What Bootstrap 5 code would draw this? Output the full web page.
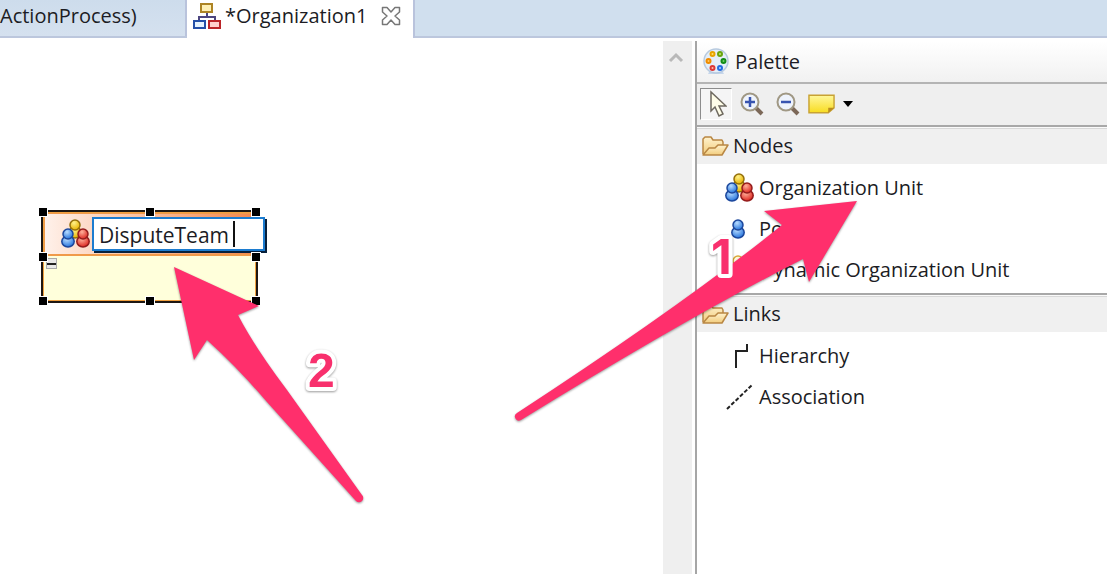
<!DOCTYPE html>
<html lang="en">
<head>
<meta charset="utf-8">
<meta name="viewport" content="width=device-width, initial-scale=1">
<title>Organization1</title>
<link href="https://cdn.jsdelivr.net/npm/bootstrap@5.3.0/dist/css/bootstrap.min.css" rel="stylesheet">
<style>
  body { font-family: "Open Sans", "Noto Sans", sans-serif; font-size: 20px; line-height: 24px; color: #1c1c24; background: #fff; padding: 0 1px 4px 0; }
  button { color: inherit; border: 0; background: none; padding: 0; text-align: left; white-space: nowrap; }
  svg { flex: none; display: block; }

  .editor-tabs { height: 38px; background: #d0dfee; border-bottom: 2px solid #bcc7dd; }
  .editor-tab { height: 38px; padding-bottom: 6px; border-right: 2px solid #b9c3dc; }
  .tab-back { width: 187px; height: 36px; padding-bottom: 4px; background: linear-gradient(#cddcec, #d5e1ef); }
  .tab-front { width: 228px; padding-left: 6px; background: #fff; }

  .workarea { padding-top: 3px; }
  .scroll-track { width: 29px; padding-right: 3px; background: #efefef; }
  .palette { width: 412px; margin-left: 3px; border-left: 2px solid #a6a6a6; }
  .palette-title { height: 43px; padding-left: 6px; gap: 6px; background: linear-gradient(#fff, #f1f1f1); border-bottom: 2px solid #b4b4b4; }
  .palette-tools { height: 41px; padding: 0 0 2px 3px; gap: 8px; background: #efefef; }
  .tool-active { width: 32px; height: 32px; border: 1px solid #fff; border-top-color: #8c8c8c; border-left-color: #8c8c8c; background: #f5f5f5; }
  .drawer-head { height: 39px; padding-left: 4px; background: #f0f0f0; border-top: 2px solid #a8a8a8; box-shadow: inset 0 1px #fafafa, inset 0 2px #d8d8d8; }
  .drawer-list { padding: 3px 0 3px 26px; }
  .drawer-list button { height: 41px; }

  .org-node { left: 41px; top: 169px; width: 217px; height: 93px; border: 2px solid #1d1713; background: #ffffdb; }
  .org-head { height: 44px; padding-left: 15px; background: linear-gradient(90deg, #fff1ea, #f4874c); border: 2px solid #f09a4a; }
  .org-frame { inset: 0; border: 1px solid #f0a040; }
  .name-box { left: 49px; top: 5px; width: 173px; height: 34px; border: 2px solid #1c7cd0; box-shadow: 2px 2px #07203c; background: #fff; }
  .name-box input { border: 0; outline: 0; width: 100%; padding: 1px 0 0 5px; background: none; color: inherit; font-size: 21px; }
  .text-caret { left: 139px; top: 2px; width: 2px; height: 26px; background: #111; }
  .grip { width: 10px; height: 10px; background: #000; border: 1px solid #fff; transform: translate(-50%, -50%); }
  .fold { left: 3px; top: 46px; width: 11px; height: 11px; background: #e8e8e8; border: 1px solid #aaa; }
  .fold::after { content: ""; display: block; height: 2px; background: #222; }

  .callout { pointer-events: none; overflow: visible; filter: drop-shadow(0 1px 1px #0006); }
  .callout path { fill: #ff2f6c; }
  .callout text { font: bold 48px "Liberation Sans", sans-serif; fill: #f8306d; stroke: #fff; stroke-width: 8px; stroke-linejoin: round; paint-order: stroke; }
  .callout-1 text { font-family: Inter, sans-serif; }
  .callout-2 { left: 170px; top: 222px; }
  .callout-1 { right: 230px; top: 156px; }
</style>
</head>
<body class="d-flex flex-column vh-100 overflow-hidden">

<svg width="0" height="0" class="position-absolute" aria-hidden="true">
  <defs>
    <radialGradient id="gBlue" cx=".4" cy=".3" r=".7"><stop stop-color="#b8dcff"/><stop offset="1" stop-color="#2674dc"/></radialGradient>
    <radialGradient id="gRed" cx=".4" cy=".3" r=".7"><stop stop-color="#ffb09a"/><stop offset="1" stop-color="#dc2720"/></radialGradient>
    <radialGradient id="gGold" cx=".4" cy=".3" r=".7"><stop stop-color="#fff18a"/><stop offset="1" stop-color="#e8b400"/></radialGradient>
    <linearGradient id="gNote" x2="0" y2="1"><stop stop-color="#fff79a"/><stop offset="1" stop-color="#f8dc20"/></linearGradient>
    <linearGradient id="gFolder" x2="0" y2="1"><stop stop-color="#fff3cf"/><stop offset="1" stop-color="#f2cc7c"/></linearGradient>
  </defs>
  <symbol id="person" viewBox="0 0 14 20">
    <ellipse cx="7" cy="13.500" rx="6.200" ry="5.500" stroke-width="1.500"/>
    <circle cx="7" cy="6" r="5" stroke-width="1.500"/>
  </symbol>
  <symbol id="team" viewBox="0 0 30 30">
    <use href="#person" x="8" y="0" width="14" height="20" fill="url(#gGold)" stroke="#94700c"/>
    <use href="#person" x="1" y="9" width="14" height="20" fill="url(#gBlue)" stroke="#1c479c"/>
    <use href="#person" x="16" y="9" width="14" height="20" fill="url(#gRed)" stroke="#941c1c"/>
  </symbol>
  <symbol id="folder" viewBox="0 0 28 22">
    <path d="M2 19V4l2-2h6l2 3h9l1 2v3" fill="url(#gFolder)" stroke="#b98743" stroke-width="1.500" stroke-linejoin="round"/>
    <path d="M2 20 8 13h6l3-3h10l-6 10Z" fill="url(#gFolder)" stroke="#b98743" stroke-width="1.500" stroke-linejoin="round"/>
  </symbol>
  <symbol id="lens" viewBox="0 0 24 24">
    <path d="m16 16 6 6" stroke="#7c6858" stroke-width="4"/>
    <circle cx="10" cy="10" r="8.500" fill="#eef3fc" stroke="#a09884" stroke-width="2"/>
  </symbol>
</svg>

<nav class="editor-tabs d-flex flex-shrink-0" aria-label="Editors">
  <button class="editor-tab tab-back d-flex align-items-center">ActionProcess)</button>
  <div class="editor-tab tab-front d-flex align-items-center">
    <svg width="28" height="28" viewBox="0 0 28 28" aria-hidden="true">
      <path d="M14 10v5M6 19v-4h16v4" fill="none" stroke="#4c4680" stroke-width="2"/>
      <rect x="8" y="2" width="11" height="8" fill="#fff0b4" stroke="#ad8424" stroke-width="2"/>
      <rect x="1" y="19" width="11" height="7" fill="#e5f3ff" stroke="#2450a8" stroke-width="2"/>
      <rect x="16" y="19" width="11" height="7" fill="#ffd0cc" stroke="#bb2428" stroke-width="2"/>
    </svg>
    <button class="ms-1 me-auto">*Organization1</button>
    <button class="me-2 pe-1" aria-label="Close tab">
      <svg width="20" height="20" viewBox="0 0 20 20"><path d="M1.500 1.500h4.500L10 6l4-4.500h4.500V6L14 10l4.500 4v4.500H14L10 14l-4 4.500H1.500V14L6 10 1.500 6Z" fill="#fff" stroke="#777" stroke-width="1.500" stroke-linejoin="round"/></svg>
    </button>
  </div>
</nav>

<main class="workarea d-flex flex-grow-1">
  <section class="flex-grow-1 position-relative" aria-label="Diagram">
    <div class="org-node position-absolute">
      <div class="org-frame position-absolute"></div>
      <div class="org-head d-flex align-items-center"><svg width="30" height="30"><use href="#team"/></svg></div>
      <button class="fold position-absolute" aria-label="Collapse"></button>
      <div class="name-box position-absolute d-flex align-items-center">
        <input type="text" value="DisputeTeam" aria-label="Unit name">
        <span class="text-caret position-absolute"></span>
      </div>
      <i class="grip position-absolute top-0 start-0"></i>
      <i class="grip position-absolute top-0 start-50"></i>
      <i class="grip position-absolute top-0 start-100"></i>
      <i class="grip position-absolute top-50 start-0"></i>
      <i class="grip position-absolute top-50 start-100"></i>
      <i class="grip position-absolute top-100 start-0"></i>
      <i class="grip position-absolute top-100 start-50"></i>
      <i class="grip position-absolute top-100 start-100"></i>
    </div>
    <svg class="callout callout-2 position-absolute" width="200" height="245" viewBox="170 263 200 245">
      <path d="M174 267 259 306 238 315Q254 346 287 390L362 495A4 4 0 0 1 356 501L267 402Q238 368 207 340L194 360Z"/>
      <text x="308" y="387">2</text>
    </svg>
  </section>

  <div class="scroll-track d-flex justify-content-center">
    <svg class="mt-2" width="16" height="16" viewBox="0 0 16 16"><path d="m2 12 6-6 6 6" fill="none" stroke="#b8b8b8" stroke-width="3"/></svg>
  </div>

  <aside class="palette position-relative flex-shrink-0">
    <header class="palette-title d-flex align-items-center">
      <svg width="26" height="28" viewBox="0 0 26 28">
        <path d="M7 22h12l2 4H5Z" fill="#c6d6ea"/><circle cx="13" cy="13" r="12" fill="#e4eef9" stroke="#b7cadf" stroke-width="1.500"/>
        <g stroke-width="2"><circle cx="9.500" cy="6" r="2" fill="#ffe070" stroke="#e8a400"/><circle cx="17" cy="6" r="2" fill="#c8e870" stroke="#68a410"/><circle cx="5.500" cy="13" r="2" fill="#ffc860" stroke="#f08c00"/><circle cx="20.500" cy="13" r="2" fill="#70d068" stroke="#148c18"/><circle cx="9.500" cy="20" r="2" fill="#ffc0b0" stroke="#dc3838"/><circle cx="17" cy="20" r="2" fill="#b0dcff" stroke="#246ce0"/></g>
      </svg>
      <span>Palette</span>
    </header>
    <div class="palette-tools d-flex align-items-center">
      <button class="tool-active d-flex align-items-center justify-content-center" aria-label="Select">
        <svg width="22" height="28" viewBox="0 0 22 28"><path d="M6 2v19l4-4 4 9 4-2-4-8h7Z" fill="#fffde8" stroke="#6f6a60" stroke-width="1.500"/></svg>
      </button>
      <button aria-label="Zoom in"><svg width="24" height="24" viewBox="0 0 24 24"><use href="#lens"/><path d="M5 10h10M10 5v10" stroke="#3854b0" stroke-width="2.500"/></svg></button>
      <button class="ms-1 me-n1" aria-label="Zoom out"><svg width="24" height="24" viewBox="0 0 24 24"><use href="#lens"/><path d="M5 10h10" stroke="#3854b0" stroke-width="2.500"/></svg></button>
      <button class="d-flex align-items-center gap-2" aria-label="Note">
        <svg width="27" height="22" viewBox="0 0 28 22"><path d="M1 2h26v13l-6 5H1Z" fill="url(#gNote)" stroke="#c8a234" stroke-width="1.500"/><path d="M21 20v-5h6Z" fill="#b98c20"/></svg>
        <svg width="10" height="6" viewBox="0 0 10 6"><path d="M0 0h10L5 6Z"/></svg>
      </button>
    </div>

    <button class="drawer-head w-100 d-flex align-items-center gap-1"><svg width="28" height="22"><use href="#folder"/></svg><span>Nodes</span></button>
    <div class="drawer-list d-flex flex-column">
      <button class="d-flex align-items-center gap-1"><svg width="32" height="30" viewBox="0 0 32 30"><use href="#team" x="1" width="30" height="30"/></svg><span>Organization Unit</span></button>
      <button class="d-flex align-items-center gap-1"><svg width="32" height="20"><use href="#person" x="8" width="14" height="20" fill="url(#gBlue)" stroke="#1c479c"/></svg><span>Position</span></button>
      <button class="d-flex align-items-center gap-1"><svg width="32" height="30"><use href="#person" x="8" width="14" height="20" fill="#fff8dc" stroke="#d8a838"/><use href="#person" x="0" y="9" width="14" height="20" fill="#e8f2ff" stroke="#3460b4"/><use href="#person" x="16" y="9" width="14" height="20" fill="#ffe8e4" stroke="#b43434"/></svg><span>Dynamic Organization Unit</span></button>
    </div>

    <button class="drawer-head w-100 d-flex align-items-center gap-1"><svg width="28" height="22"><use href="#folder"/></svg><span>Links</span></button>
    <div class="drawer-list d-flex flex-column">
      <button class="d-flex align-items-center gap-1"><svg width="32" height="26" viewBox="0 0 32 26"><path d="M13 25V8h11V1" fill="none" stroke="#222" stroke-width="2"/></svg><span>Hierarchy</span></button>
      <button class="d-flex align-items-center gap-1"><svg width="32" height="28" viewBox="0 0 32 28"><path d="M4 26 29 2" fill="none" stroke="#222" stroke-width="2" stroke-dasharray="4 2"/></svg><span>Association</span></button>
    </div>

    <svg class="callout callout-1 position-absolute" width="366" height="230" viewBox="511 197 366 230">
      <path d="M857 201 764 211 782 225Q684 304 517 413A4 4 0 0 0 521 420Q690 316 803 259L809 282Z"/>
      <text x="711" y="274">1</text>
    </svg>
  </aside>
</main>
<script src="https://cdn.jsdelivr.net/npm/bootstrap@5.3.0/dist/js/bootstrap.bundle.min.js"></script>
</body>
</html>
